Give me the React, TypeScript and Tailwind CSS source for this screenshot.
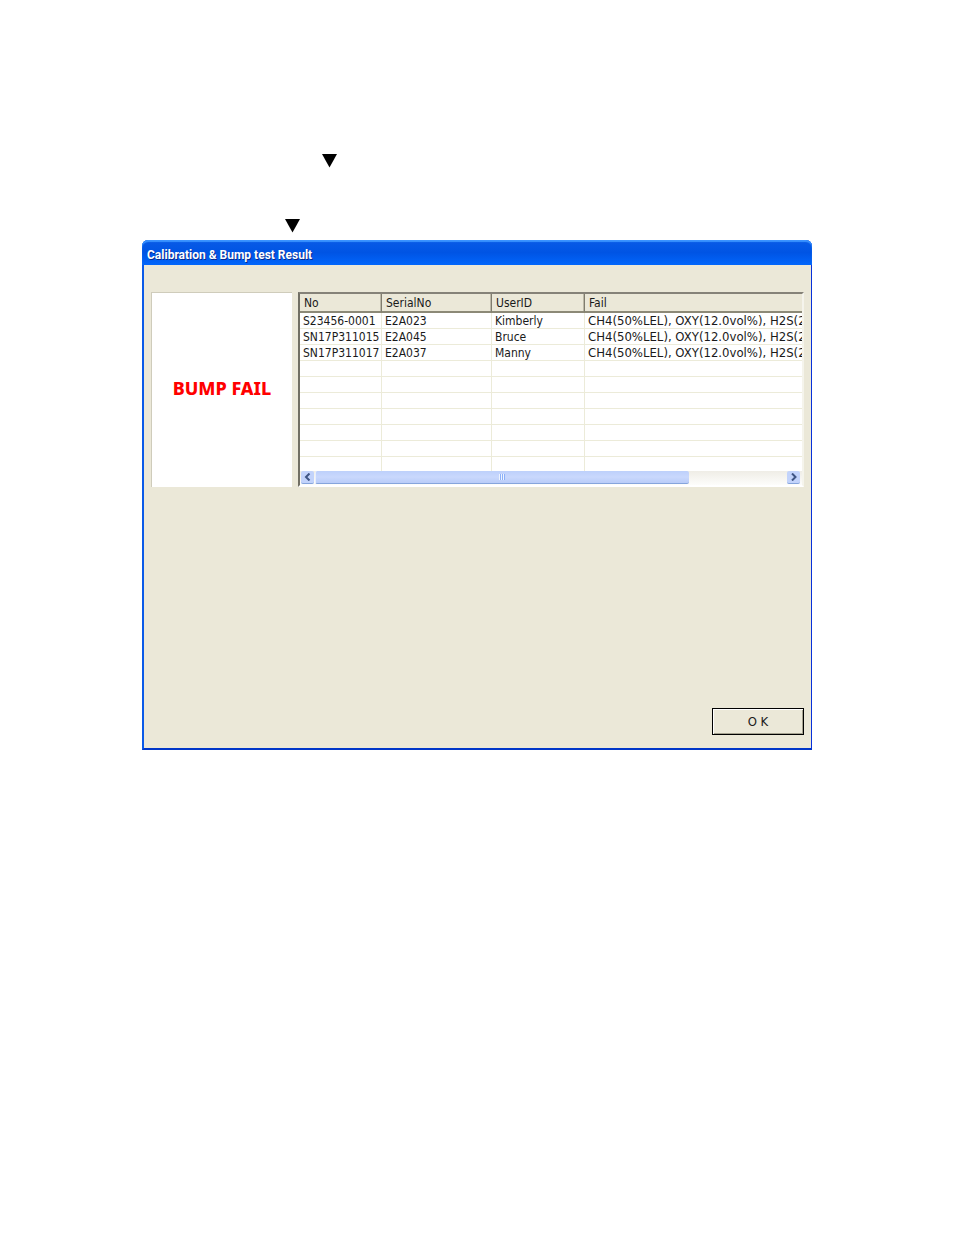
import React from 'react';

interface ResultRow {
  no: string;
  serialNo: string;
  userId: string;
  fail: string;
}

const FAIL_TEXT = 'CH4(50%LEL), OXY(12.0vol%), H2S(2';

const results: ResultRow[] = [
  { no: 'S23456-0001', serialNo: 'E2A023', userId: 'Kimberly', fail: FAIL_TEXT },
  { no: 'SN17P311015', serialNo: 'E2A045', userId: 'Bruce', fail: FAIL_TEXT },
  { no: 'SN17P311017', serialNo: 'E2A037', userId: 'Manny', fail: FAIL_TEXT },
];

const EMPTY_ROWS = 7;

function Marker() {
  return (
    <svg className="block h-4 w-4" viewBox="0 0 16 16" aria-hidden="true">
      <path d="M0 1H15L7.5 14.5Z" fill="#000" />
    </svg>
  );
}

function ScrollArrow({ direction }: { direction: 'left' | 'right' }) {
  return (
    <button
      aria-label={direction === 'left' ? 'Scroll left' : 'Scroll right'}
      className="flex h-[13px] w-[13px] shrink-0 items-center justify-center rounded-xs border-b border-[#86a5dc] bg-[#c2d3fb]"
    >
      <svg className="h-2 w-2" viewBox="0 0 8 8" fill="none" stroke="#3f5584" strokeWidth="2">
        <path d={direction === 'left' ? 'M5.5 0.5L2 4L5.5 7.5' : 'M2 0.5L5.5 4L2 7.5'} />
      </svg>
    </button>
  );
}

function HorizontalScrollbar() {
  return (
    <div className="flex h-[14px] items-start bg-linear-to-b from-[#efede6] to-[#fdfdfb] pl-px pr-0.5">
      <ScrollArrow direction="left" />
      <div className="flex flex-1">
        <div className="ml-px flex h-[13px] w-[79%] items-center justify-center rounded-xs border-b border-l border-b-[#86a5dc] border-l-[#e6eeff] bg-linear-to-b from-[#bdd0fb] via-[#c9d8fd] to-[#b9ccf8]">
          <svg className="h-1.5 w-1.5" viewBox="0 0 6 6" shapeRendering="crispEdges" aria-hidden="true">
            <path d="M0 0H1V6H0ZM2 0H3V6H2ZM4 0H5V6H4Z" fill="#eef4fe" />
            <path d="M1 0H2V6H1ZM3 0H4V6H3ZM5 0H6V6H5Z" fill="#8cb0f8" />
          </svg>
        </div>
      </div>
      <ScrollArrow direction="right" />
    </div>
  );
}

function ResultTable() {
  const headCell =
    'h-[19px] border-b-2 border-b-[#8c8977] p-0 pl-1 pt-px text-left font-normal leading-4 overflow-hidden whitespace-nowrap';
  const divider = 'border-r border-r-[#7f7c6e] shadow-[inset_-1px_0_0_#bdb9a8]';
  const cell =
    'h-4 border-b border-b-[#ecebd9] p-0 pl-[3px] pt-px leading-[14px] overflow-hidden whitespace-nowrap';
  const line = 'border-r border-r-[#ecebd9]';

  return (
    <div className="flex min-w-0 flex-1 flex-col border-2 border-b-white border-l-[#716f64] border-r-[#f5f4ec] border-t-[#858278] bg-white">
      <div className="h-[177px] overflow-hidden">
        <table className="w-full table-fixed border-separate border-spacing-0 text-xs text-[#1a1a1a]">
          <colgroup>
            <col className="w-[82px]" />
            <col className="w-[110px]" />
            <col className="w-[93px]" />
            <col />
          </colgroup>
          <thead className="bg-[#ebe8d8]">
            <tr>
              <th className={`${headCell} ${divider}`}>No</th>
              <th className={`${headCell} ${divider}`}>SerialNo</th>
              <th className={`${headCell} ${divider}`}>UserID</th>
              <th className={headCell}>Fail</th>
            </tr>
          </thead>
          <tbody>
            {results.map((row) => (
              <tr key={row.no}>
                <td className={`${cell} ${line}`}>{row.no}</td>
                <td className={`${cell} ${line}`}>{row.serialNo}</td>
                <td className={`${cell} ${line}`}>{row.userId}</td>
                <td className={`${cell} text-[13px]`}>{row.fail}</td>
              </tr>
            ))}
            {Array.from({ length: EMPTY_ROWS }, (_, i) => (
              <tr key={i}>
                <td className={`${cell} ${line}`} />
                <td className={`${cell} ${line}`} />
                <td className={`${cell} ${line}`} />
                <td className={cell} />
              </tr>
            ))}
          </tbody>
        </table>
      </div>
      <HorizontalScrollbar />
    </div>
  );
}

function ResultDialog() {
  return (
    <section className="rounded-t-md border-b-2 border-l-2 border-r border-b-[#0036c8] border-l-[#0a5ae8] border-r-[#0831d9] bg-[#ebe8d8]">
      <header className="-ml-0.5 -mr-px flex h-[25px] items-center rounded-t-md bg-linear-to-b from-[#0a5be6] via-[#0054e4] to-[#0266fb] pl-[5px] pt-1 shadow-[inset_0_2px_1px_#3a93ff]">
        <h1 className="font-[Roboto,sans-serif] text-xs font-bold leading-5 text-white [text-shadow:1px_1px_0_#0a2a8c]">
          Calibration &amp; Bump test Result
        </h1>
      </header>
      <div className="px-[7px] pb-[13px] pt-[27px]">
        <div className="flex gap-1.5">
          <div className="flex h-[195px] w-[141px] shrink-0 items-center justify-center border-l border-t border-[#cfccbb] bg-white pb-1">
            <p className="font-['Noto_Sans',sans-serif] text-lg font-extrabold text-[#ff0000]">BUMP FAIL</p>
          </div>
          <ResultTable />
        </div>
        <div className="mt-[221px] flex justify-end">
          <button className="h-[27px] w-[92px] border border-black bg-[#ebe8d8] text-[13px] text-[#1a1a1a] shadow-[inset_1px_1px_0_#ffffff,inset_-1px_-1px_0_#a5a290]">
            O K
          </button>
        </div>
      </div>
    </section>
  );
}

function App() {
  return (
    <main className="min-h-screen bg-white px-[142px] pt-[153px] font-['DejaVu_Sans_Condensed','DejaVu_Sans',sans-serif]">
      <div className="pl-[180px]">
        <Marker />
      </div>
      <div className="mb-1.5 mt-[49px] pl-[143px]">
        <Marker />
      </div>
      <ResultDialog />
    </main>
  );
}

export default App;
